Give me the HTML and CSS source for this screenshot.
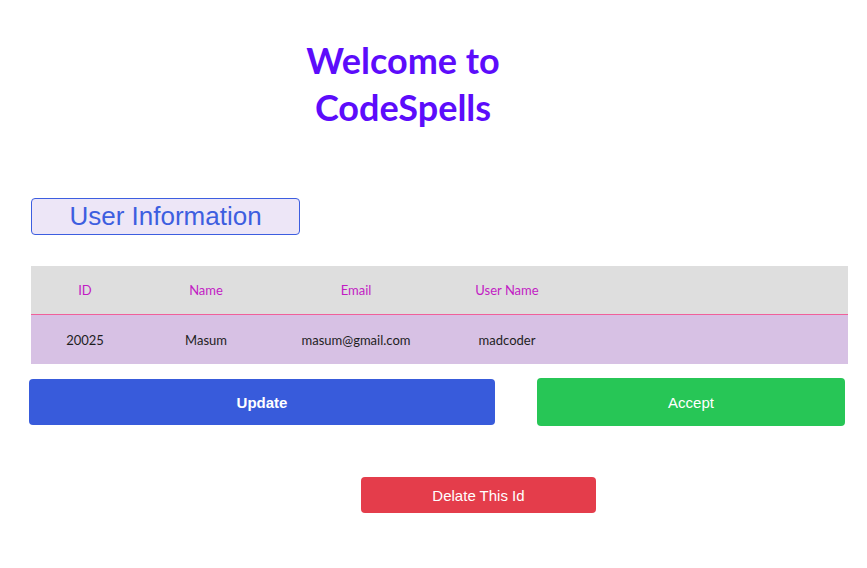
FILE: index.html
```html
<!DOCTYPE html>
<html>
<head>
<meta charset="utf-8">
<link rel="stylesheet" href="styles.css">
</head>
<body>
<div class="page">
  <h1 class="title">Welcome to<br>CodeSpells</h1>
  <div class="info-wrap"><div class="info">User Information</div></div>
  <div class="table">
    <div class="row head">
      <div class="c c1">ID</div>
      <div class="c c2">Name</div>
      <div class="c c3">Email</div>
      <div class="c c4">User Name</div>
    </div>
    <div class="row body">
      <div class="c c1">20025</div>
      <div class="c c2">Masum</div>
      <div class="c c3">masum@gmail.com</div>
      <div class="c c4">madcoder</div>
    </div>
  </div>
  <div class="actions">
    <button class="btn update">Update</button>
    <button class="btn accept">Accept</button>
  </div>
  <div class="del-wrap"><button class="btn delete">Delate This Id</button></div>
</div>
</body>
</html>
```
FILE: styles.css
```css
html, body { margin: 0; padding: 0; background: #fff; }
.page { width: 867px; height: 568px; position: relative; font-family: "Lato", "Open Sans", sans-serif; }
.title {
  margin: 0; padding-top: 37px;
  width: 806px;
  text-align: center;
  font-family: "Lato", sans-serif;
  font-weight: 700; font-size: 36px; line-height: 47px;
  color: #5c0cfb;
}
.info-wrap { padding: 67px 0 0 31px; }
.info {
  width: 267px; height: 35px; box-sizing: content-box;
  border: 1px solid #3d5ee0; border-radius: 4px;
  background: #ede6f7;
  color: #3d5ee0;
  font-family: "Liberation Sans", sans-serif; font-size: 26px; line-height: 35px;
  text-align: center;
}
.table { margin: 31px 0 0 31px; width: 817px; }
.row { display: flex; align-items: center; font-size: 13px; }
.row.head { height: 48px; background: #dedede; color: #c21cc4; border-bottom: 1px solid #f0609a; }
.row.body { height: 49px; background: #d7c1e4; color: #1e1e1e; }
.c { text-align: center; }
.c1 { width: 108px; }
.c2 { width: 134px; }
.c3 { width: 166px; }
.c4 { width: 136px; }
.actions { display: flex; align-items: center; padding: 14px 0 0 29px; gap: 42px; }
.btn {
  border: none; border-radius: 4px; color: #fff;
  font-family: "Liberation Sans", sans-serif; font-size: 15px;
  padding: 0; cursor: pointer;
}
.update { width: 466px; height: 46px; background: #385bdb; font-weight: 700; }
.accept { width: 308px; height: 48px; background: #27c656; }
.del-wrap { padding: 51px 0 0 361px; }
.delete { width: 235px; height: 36px; background: #e43d4b; }
```
